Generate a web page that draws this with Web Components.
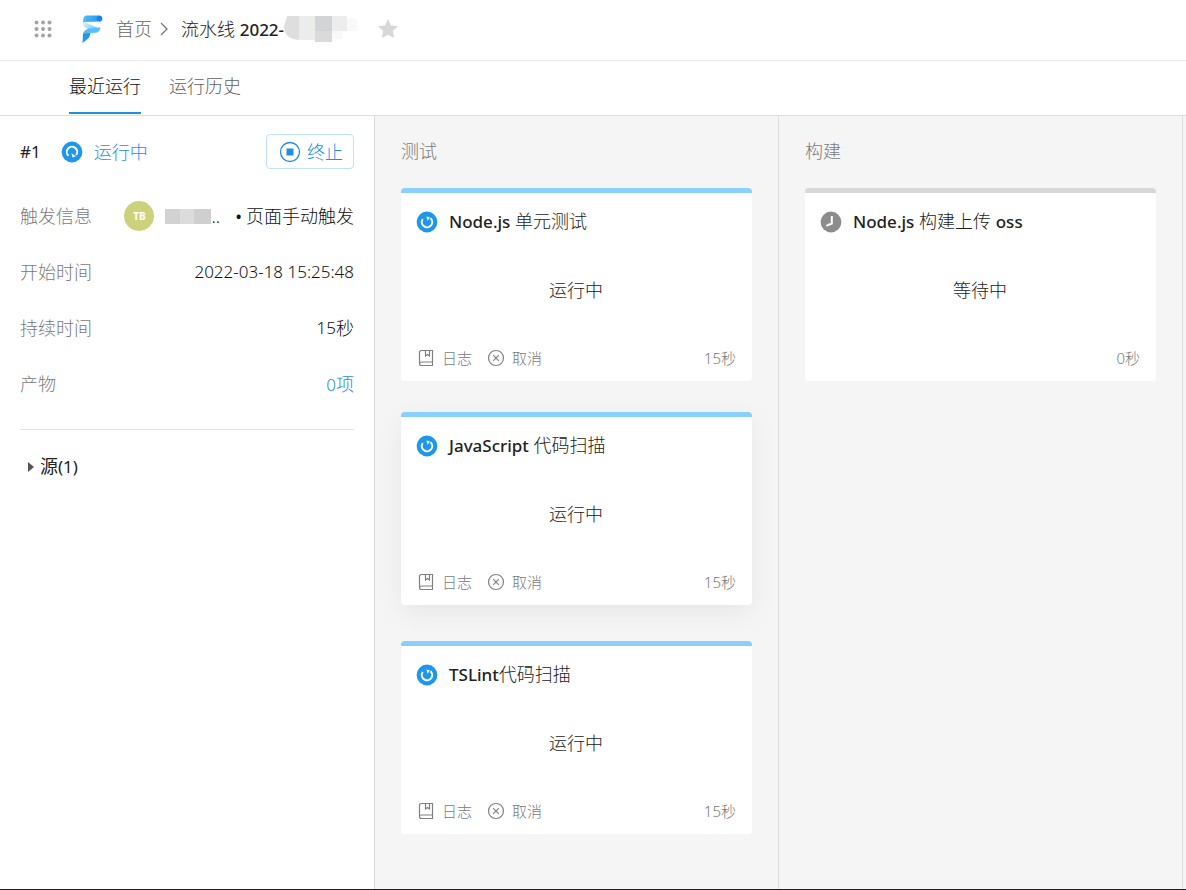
<!DOCTYPE html>
<html lang="zh-CN">
<head>
<meta charset="utf-8">
<title>流水线</title>
<style>
  html, body { margin: 0; height: 100%; }
  body {
    font: 400 18px/24px "Noto Sans", "Noto Sans CJK SC", sans-serif;
    color: #222;
    background: #fff;
    --blue: #1f8fdf;
    --muted: #7a7a7a;
    --line: #dedede;
  }
</style>
</head>
<body>
<flow-app></flow-app>

<template id="t-app">
  <style>
    :host { display: flex; flex-direction: column; min-height: 100vh; box-sizing: border-box; border-bottom: 1px solid #1b1b2a; }
    main { flex: 1; display: flex; background: #f5f5f5; }
  </style>
  <flow-header></flow-header>
  <flow-tabs></flow-tabs>
  <main>
    <run-summary></run-summary>
    <flow-stage name="测试">
      <job-card state="running" status="运行中" time="15"><b>Node.js</b> 单元测试</job-card>
      <job-card state="running" status="运行中" time="15" raised><b>JavaScript</b> 代码扫描</job-card>
      <job-card state="running" status="运行中" time="15"><b>TSLint</b>代码扫描</job-card>
    </flow-stage>
    <flow-stage name="构建">
      <job-card state="waiting" status="等待中" time="0"><b>Node.js</b> 构建上传 <b>oss</b></job-card>
    </flow-stage>
  </main>
</template>

<template id="t-header">
  <style>
    :host { display: flex; align-items: center; box-sizing: border-box; height: 61px; padding: 0 34px 2px; border-bottom: 1px solid #ececec; }
    svg { display: block; flex: none; }
    button { border: 0; padding: 0; background: none; }
    .logo { margin: 0 13px 0 29px; }
    nav { display: flex; align-items: center; font-weight: 300; }
    nav a { color: #666; text-decoration: none; }
    .sep { margin: 0 13px 0 8px; }
    .latin { font-size: 17px; font-weight: 500; }
    .mask { margin-right: 19px; }
  </style>
  <button aria-label="应用">
    <svg width="18" height="18" viewBox="0 0 18 18" fill="#a3a3a3"><circle cx="2.5" cy="2.5" r="2"/><circle cx="9" cy="2.5" r="2"/><circle cx="15.5" cy="2.5" r="2"/><circle cx="2.5" cy="9" r="2"/><circle cx="9" cy="9" r="2"/><circle cx="15.5" cy="9" r="2"/><circle cx="2.5" cy="15.5" r="2"/><circle cx="9" cy="15.5" r="2"/><circle cx="15.5" cy="15.5" r="2"/></svg>
  </button>
  <svg class="logo" width="22" height="28" viewBox="0 0 22 28">
    <defs>
      <linearGradient id="a" x1="0" x2="1"><stop offset="0" stop-color="#4dbcf8"/><stop offset="1" stop-color="#2196f0"/></linearGradient>
      <linearGradient id="b" x1="0" x2="1" y1="0" y2="1"><stop offset="0" stop-color="#e4f6ff"/><stop offset="1" stop-color="#5cc3fa"/></linearGradient>
      <linearGradient id="c" x1="0" x2="0" y1="0" y2="1"><stop offset="0" stop-color="#2a8ee8"/><stop offset="1" stop-color="#1fa3f5"/></linearGradient>
    </defs>
    <path d="M2 6.500q3 1 14 6l-4 4L4 12Q1 10 2 6.500z" fill="url(#b)"/>
    <path d="M5.500 .500H19q3.500 2.500 1 6L2 7Q2 1 5.500 .500z" fill="url(#a)"/>
    <circle cx="18.500" cy="3.500" r="2.800" fill="#1583ea"/>
    <path d="M7 13.500q4-.200 12.500-1.300-1 5.300-5 5.600L2 18.300q1.500-3 5-4.800z" fill="#56bff9"/>
    <path d="M2 18.300L9.500 18Q8.500 23 6 24.500L1.500 28z" fill="url(#c)"/>
  </svg>
  <nav>
    <a href="#">首页</a>
    <svg class="sep" width="8" height="14" viewBox="0 0 8 14" fill="none" stroke="#777" stroke-width="1.300"><path d="M1 1L7 7 1 13"/></svg>
    <span>流水线 <span class="latin">2022-</span></span>
  </nav>
  <svg class="mask" width="74" height="28" viewBox="0 0 74 28">
    <path d="M3 1h12v24Q0 24 0 11z" fill="#dedede"/><path d="M15 1h16v24H15z" fill="#ececec"/><path d="M31 1h17v15H31z" fill="#d2d4d8"/><path d="M31 16h17v11H31z" fill="#dadada"/><path d="M48 1h15v15H48z" fill="#ededed"/><path d="M48 16h10v8H48zM63 3h10v13H63z" fill="#f9f9f9"/>
  </svg>
  <button aria-label="收藏">
    <svg width="22" height="22" viewBox="0 0 22 22" fill="#d8d8d8"><path d="M11 1l3 6.500 7 .800-5.200 4.800 1.400 7L11 16.700l-6.200 3.400 1.400-7L1 8.300l7-.800z"/></svg>
  </button>
</template>

<template id="t-tabs">
  <style>
    :host { display: flex; gap: 28px; height: 54px; padding: 0 69px; border-bottom: 1px solid var(--line); font-weight: 300; }
    a { box-sizing: border-box; padding-top: 13px; height: 53px; color: #626262; text-decoration: none; }
    a.on { color: #111; border-bottom: 2px solid var(--blue); }
  </style>
  <a class="on" href="#">最近运行</a>
  <a href="#">运行历史</a>
</template>

<template id="t-summary">
  <style>
    :host { display: block; flex: none; box-sizing: border-box; width: 375px; padding: 18px 20px; background: #fff; border-right: 1px solid #d6d6d6; }
    svg { display: block; flex: none; }
    .top { display: flex; align-items: center; height: 35px; margin-bottom: 19px; }
    .num, .latin { font-size: 17px; }
    .run { display: flex; align-items: center; gap: 11px; margin-left: 20px; color: var(--blue); font-weight: 300; }
    button { display: flex; align-items: center; gap: 6px; height: 35px; margin-left: auto; padding: 0 10px 0 12px; border: 1px solid #bfe2fb; border-radius: 4px; background: #fff; color: var(--blue); font: inherit; font-weight: 300; }
    dl { margin: 0; padding-bottom: 17px; border-bottom: 1px solid #e2e2e2; }
    .row { display: flex; align-items: center; justify-content: space-between; height: 56px; }
    dt { color: var(--muted); font-weight: 300; }
    dd { display: flex; align-items: center; margin: 0; color: #111; font-weight: 300; }
    .face { width: 30px; height: 30px; margin-right: 11px; border-radius: 50%; background: #ccd27c; color: #fff; font-size: 10px; font-weight: 700; line-height: 30px; text-align: center; }
    .mask { width: 46px; height: 15px; background: linear-gradient(90deg, #d2d2d2 15px, #dcdcdc 15px 29px, #cfcfcf 29px); }
    .dot { margin: 0 4px 0 15px; font-weight: 400; }
    dd a { color: var(--blue); text-decoration: none; }
    summary { display: flex; align-items: center; gap: 6px; margin: 24px 0 0 8px; list-style: none; font-weight: 400; }
  </style>
  <div class="top">
    <span class="num">#1</span>
    <span class="run">
      <svg width="22" height="22" viewBox="0 0 22 22"><circle cx="11" cy="11" r="10.400" fill="#1e96eb"/><path d="M7.500 14.800A5.200 5.200 0 1 1 15.200 14" fill="none" stroke="#fff" stroke-width="2"/><path d="M10.400 12.200l1.200 4.400 3.400-1.300z" fill="#fff"/></svg>
      运行中</span>
    <button><svg width="22" height="22" viewBox="0 0 22 22"><circle cx="11" cy="11" r="9.500" fill="none" stroke="#1f8fdf" stroke-width="1.300"/><path d="M7.500 7.500h7v7h-7z" fill="#1f8fdf"/></svg>终止</button>
  </div>
  <dl>
    <div class="row"><dt>触发信息</dt><dd><span class="face">TB</span><span class="mask"></span><span>..</span><span class="dot">•</span>页面手动触发</dd></div>
    <div class="row"><dt>开始时间</dt><dd class="latin">2022-03-18 15:25:48</dd></div>
    <div class="row"><dt>持续时间</dt><dd><span class="latin">15</span>秒</dd></div>
    <div class="row"><dt>产物</dt><dd><a href="#"><span class="latin">0</span>项</a></dd></div>
  </dl>
  <details>
    <summary><svg width="6" height="10" viewBox="0 0 6 10"><path d="M0 0l6 5-6 5z" fill="#555"/></svg><span>源<span class="latin">(1)</span></span></summary>
  </details>
</template>

<template id="t-stage">
  <style>
    :host { display: block; flex: none; box-sizing: border-box; width: 404px; padding: 23px 26px; border-right: 1px solid var(--line); }
    h2 { margin: 0 0 25px; font: inherit; font-weight: 300; color: var(--muted); }
    .jobs { display: flex; flex-direction: column; gap: 31px; }
  </style>
  <h2></h2>
  <div class="jobs"><slot></slot></div>
</template>

<template id="t-job">
  <style>
    :host { display: flex; flex-direction: column; box-sizing: border-box; height: 193px; padding: 16px 16px 11px 15px; border-top: 5px solid #8bd0fc; border-radius: 4px; background: #fff; }
    :host([state="waiting"]) { border-top-color: #d8d8d8; }
    :host([raised]) { margin-bottom: 5px; box-shadow: 0 8px 28px rgba(0, 0, 0, .06); }
    svg { display: block; flex: none; }
    header { display: flex; align-items: center; gap: 11px; }
    h3 { margin: 0; font: inherit; font-weight: 300; }
    ::slotted(b) { font-size: 17px; font-weight: 500; }
    .status { margin: 0; flex: 1; display: flex; align-items: center; justify-content: center; font-weight: 300; }
    footer { display: flex; align-items: center; gap: 15px; height: 24px; padding-left: 1px; color: var(--muted); font-size: 15px; font-weight: 300; }
    button { display: flex; align-items: center; gap: 7px; border: 0; padding: 0; background: none; color: inherit; font: inherit; }
    :host([state="waiting"]) button { display: none; }
    time { margin-left: auto; }
  </style>
  <header><span class="icon"></span><h3><slot></slot></h3></header>
  <p class="status"></p>
  <footer>
    <button><svg width="18" height="18" viewBox="0 0 18 18" fill="none" stroke="#808080" stroke-width="1.200"><path d="M4.500 1.500h11v15h-11q-2 0-2-2v-11q0-2 2-2zM2.500 14.500q0-1.500 2-1.500h11M8.500 1.500v5.500l2-1.500 2 1.500v-5.500"/></svg>日志</button>
    <button><svg width="18" height="18" viewBox="0 0 18 18" fill="none" stroke="#808080" stroke-width="1.200"><circle cx="9" cy="9" r="7.500"/><path d="M6.200 6.200l5.600 5.600M11.800 6.200l-5.600 5.600"/></svg>取消</button>
    <time></time>
  </footer>
</template>

<script>
  const icons = {
    running: '<svg width="22" height="22" viewBox="0 0 22 22"><circle cx="11" cy="11" r="10.400" fill="#1e96eb"/><path d="M14.500 7.200A5.200 5.200 0 1 1 6.800 8" fill="none" stroke="#fff" stroke-width="2"/><path d="M11.600 9.800l-1.200-4.400L14 6.200z" fill="#fff"/></svg>',
    waiting: '<svg width="22" height="22" viewBox="0 0 22 22"><circle cx="11" cy="11" r="10.400" fill="#8c8c8c"/><path d="M11.800 5v7.500l-5.500 2.300" fill="none" stroke="#fff" stroke-width="2"/></svg>'
  };
  const define = (tag, id, ready) => customElements.define(tag, class extends HTMLElement {
    connectedCallback() {
      if (this.shadowRoot) return;
      const root = this.attachShadow({ mode: 'open' });
      root.append(document.getElementById(id).content.cloneNode(true));
      if (ready) ready(this, root);
    }
  });
  define('flow-header', 't-header');
  define('flow-tabs', 't-tabs');
  define('run-summary', 't-summary');
  define('flow-stage', 't-stage', (el, root) => {
    root.querySelector('h2').textContent = el.getAttribute('name');
  });
  define('job-card', 't-job', (el, root) => {
    root.querySelector('.icon').innerHTML = icons[el.getAttribute('state')];
    root.querySelector('.status').textContent = el.getAttribute('status');
    root.querySelector('time').textContent = el.getAttribute('time') + '秒';
  });
  define('flow-app', 't-app');
</script>
</body>
</html>
